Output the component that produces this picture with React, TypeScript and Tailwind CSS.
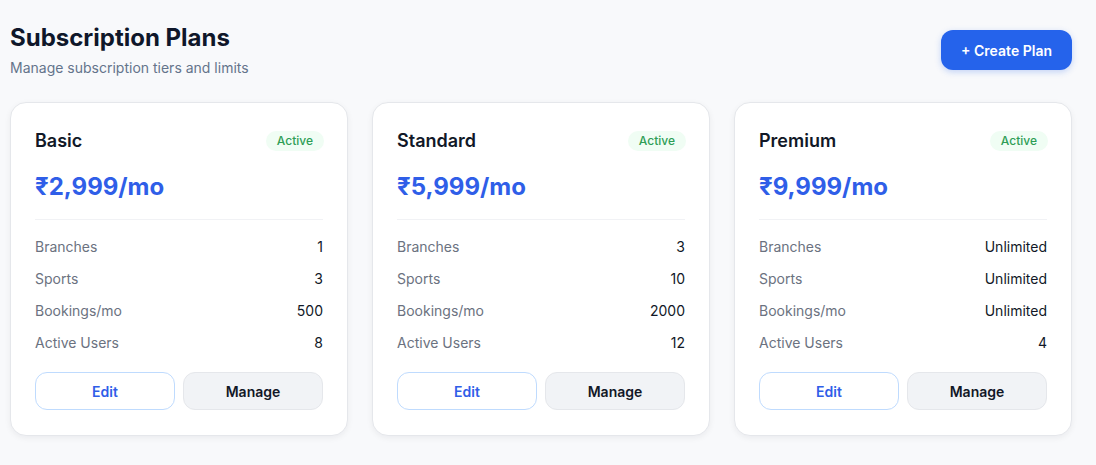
const plans = [
  { name: "Basic", price: "₹2,999/mo", branches: "1", sports: "3", bookings: "500", users: "8" },
  { name: "Standard", price: "₹5,999/mo", branches: "3", sports: "10", bookings: "2000", users: "12" },
  { name: "Premium", price: "₹9,999/mo", branches: "Unlimited", sports: "Unlimited", bookings: "Unlimited", users: "4" },
];

type Plan = (typeof plans)[number];

function PlanCard({ plan }: { plan: Plan }) {
  const rows: [string, string][] = [
    ["Branches", plan.branches],
    ["Sports", plan.sports],
    ["Bookings/mo", plan.bookings],
    ["Active Users", plan.users],
  ];

  return (
    <div className="flex flex-col rounded-2xl border border-[#e5e7eb] bg-white px-6 pt-[24px] pb-[25px] shadow-[0_2px_6px_rgba(15,23,42,0.06)]">
      <div className="flex items-center justify-between">
        <h3 className="text-[18px] font-semibold leading-7 text-[#111827]">{plan.name}</h3>
        <span className="-mr-px rounded-full bg-[#f0fdf4] px-[11px] py-[2px] text-[12px] font-medium leading-[16px] text-[#2e9e56]">
          Active
        </span>
      </div>
      <p className="mt-[16px] text-[24px] font-bold leading-8 text-[#2f5ee8]">{plan.price}</p>
      <div className="mt-[16px] border-t border-[#f1f2f5]" />
      <div className="mt-[17px] flex flex-col gap-3">
        {rows.map(([label, value]) => (
          <div key={label} className="flex items-center justify-between text-[14px] leading-5">
            <span className="text-[#6b7280]">{label}</span>
            <span className="text-[#111827]">{value}</span>
          </div>
        ))}
      </div>
      <div className="mt-[19px] flex gap-2">
        <button className="h-[38px] flex-1 rounded-xl border border-[#bfdbfe] bg-white text-[14px] font-semibold text-[#2f5ee8]">
          Edit
        </button>
        <button className="h-[38px] flex-1 rounded-xl border border-[#e5e7eb] bg-[#f1f3f6] text-[14px] font-semibold text-[#111827]">
          Manage
        </button>
      </div>
    </div>
  );
}

export default function App() {
  return (
    <div className="min-h-screen bg-[#f8f9fb] pl-[10px] pr-[24px] pt-[22px] font-['Inter',sans-serif]">
      <div className="flex items-start justify-between">
        <div>
          <h1 className="text-[24px] font-bold leading-8 text-[#0f172a]">Subscription Plans</h1>
          <p className="mt-[4px] text-[14px] leading-5 text-[#64748b]">Manage subscription tiers and limits</p>
        </div>
        <button className="mt-[8px] h-[40px] rounded-xl bg-[#2563eb] px-[20px] text-[14px] font-semibold text-white shadow-[0_2px_6px_rgba(37,99,235,0.25)]">
          + Create Plan
        </button>
      </div>
      <div className="mt-[24px] grid grid-cols-3 gap-6">
        {plans.map((p) => (
          <PlanCard key={p.name} plan={p} />
        ))}
      </div>
    </div>
  );
}
